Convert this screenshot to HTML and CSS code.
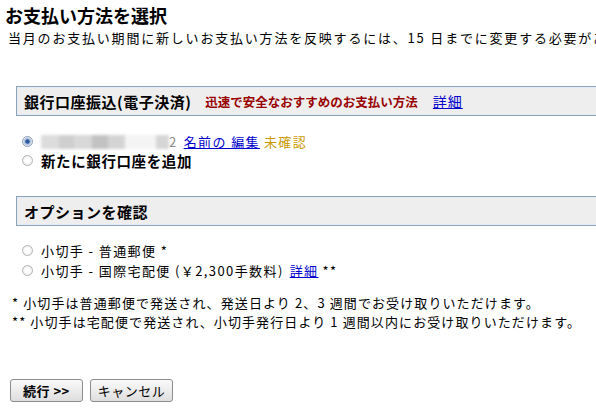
FILE: index.html
```html
<!DOCTYPE html>
<html lang="ja">
  <head>
    <meta charset="UTF-8" />
    <title>お支払い方法を選択</title>
    <link rel="stylesheet" href="styles.css">
  </head>
  <body>
    <div id="page">
      <h1 class="page-title">お支払い方法を選択</h1>
      <p class="lead">当月のお支払い期間に新しいお支払い方法を反映するには、15 日までに変更する必要がありま</p>

      <div class="section-head">
        <span class="section-title">銀行口座振込(電子決済)</span>
        <span class="recommend">迅速で安全なおすすめのお支払い方法</span>
        <a href="#" class="link">詳細</a>
      </div>
      <div class="options">
        <label class="option">
          <span class="radio checked"></span>
          <span class="masked"></span><span class="masked-tail">2</span>
          <a href="#" class="link">名前の 編集</a>
          <span class="unverified">未確認</span>
        </label>
        <label class="option bold">
          <span class="radio"></span>
          新たに銀行口座を追加
        </label>
      </div>

      <div class="section-head section-second">
        <span class="section-title">オプションを確認</span>
      </div>
      <div class="options options-check">
        <label class="option">
          <span class="radio"></span>
          小切手 - 普通郵便 *
        </label>
        <label class="option">
          <span class="radio"></span>
          小切手 - 国際宅配便 (￥2,300手数料) <a href="#" class="link">詳細</a>**
        </label>
      </div>

      <div class="notes">
        <p>* 小切手は普通郵便で発送され、発送日より 2、3 週間でお受け取りいただけます。</p>
        <p>** 小切手は宅配便で発送され、小切手発行日より 1 週間以内にお受け取りいただけます。</p>
      </div>

      <div class="buttons">
        <button class="btn btn-main">続行 &gt;&gt;</button>
        <button class="btn">キャンセル</button>
      </div>
    </div>
  </body>
</html>
```

FILE: styles.css
```css
html, body {
  margin: 0;
  height: 100%;
  overflow: hidden;
  background: #fff;
}

#page {
  font-family: "Noto Sans CJK JP", "Liberation Sans", sans-serif;
  color: #000;
  font-size: 13px;
  padding: 2px 0 0 5px;
}

.page-title {
  font-size: 18px;
  font-weight: bold;
  margin: 0;
  line-height: 26px;
  white-space: nowrap;
}

.lead {
  margin: 0 0 0 3px;
  line-height: 20px;
  white-space: nowrap;
  letter-spacing: 1.8px;
}

/* 見出しボックス（右端は画面外へはみ出す） */
.section-head {
  margin: 38px -30px 0 11px;
  height: 28px;
  display: flex;
  align-items: center;
  gap: 14px;
  padding-left: 7px;
  background: #eeeeee;
  border: 1px solid #8fa3b8;
  border-right: none;
  box-shadow: inset 0 1px 0 #e2ecf6, inset 0 -1px 0 #e2ecf6, inset 1px 0 0 #e2ecf6;
  white-space: nowrap;
}

.section-second {
  margin-top: 26px;
}

.section-title {
  font-size: 15px;
  font-weight: bold;
  letter-spacing: 0.5px;
}

.recommend {
  color: #990000;
  font-weight: bold;
  font-size: 12.5px;
}

.link {
  color: #0000cc;
  text-decoration: underline;
}

.section-head .link {
  font-size: 14px;
  margin-left: 1px;
  letter-spacing: 1px;
}

.options {
  padding: 16px 0 0 16px;
}

.options-check {
  padding-top: 14px;
}

.option {
  display: flex;
  align-items: center;
  height: 19px;
  white-space: nowrap;
  letter-spacing: 1.4px;
}

.options-check .option {
  height: 20px;
}

.option.bold {
  font-weight: bold;
  font-size: 14.5px;
  letter-spacing: 0.6px;
}

.option .link {
  margin-left: 6px;
  margin-right: 4px;
}

.radio {
  display: inline-block;
  width: 11px;
  height: 11px;
  border-radius: 50%;
  border: 1px solid #b4b4b4;
  background: radial-gradient(circle, #ffffff 30%, #e4e4e4 100%);
  margin: 0 8px 0 1px;
  box-sizing: border-box;
}

.radio.checked {
  border-color: #8a9fb8;
  background: radial-gradient(circle, #2d5aa0 0 28%, #9fb7d6 40%, #f2f5f9 75%);
}

/* ぼかされた口座名 */
.masked {
  display: inline-block;
  width: 128px;
  height: 14px;
  background: linear-gradient(90deg, #dcdcdc 0 14%, #cfcfcf 14% 26%, #d8d8d8 26% 40%, #c2c2c2 40% 52%, #d4d4d4 52% 66%, #f4f4f4 66% 90%, #d6d6d6 90%);
  filter: blur(1.5px);
}

.masked-tail {
  color: #888;
}

.unverified {
  color: #cc9900;
}

.notes {
  margin: 13px 0 0 7px;
}

.notes p {
  margin: 0;
  line-height: 19px;
  white-space: nowrap;
  letter-spacing: 1.1px;
}

.buttons {
  display: flex;
  gap: 7px;
  margin: 48px 0 0 5px;
}

.btn {
  font-family: "Noto Sans CJK JP", "Liberation Sans", sans-serif;
  font-size: 13px;
  height: 23px;
  padding: 0 7px;
  line-height: 19px;
  border: 1px solid #8c8c8c;
  border-radius: 3px;
  background: linear-gradient(#fafafa, #dedede);
  color: #000;
  letter-spacing: 0.5px;
}

.btn-main {
  font-weight: bold;
  padding: 0 12px;
}
```
